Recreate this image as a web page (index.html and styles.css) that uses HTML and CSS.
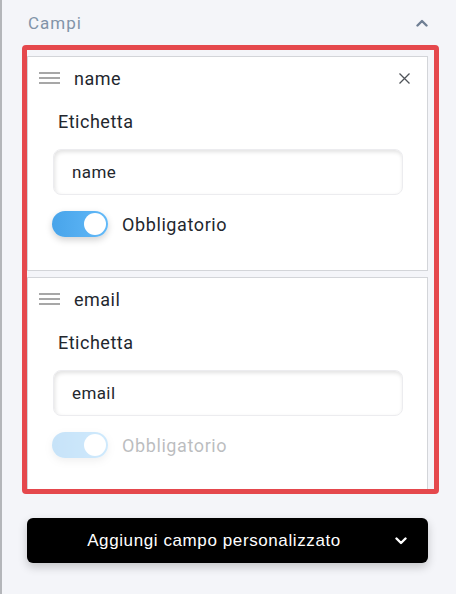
FILE: index.html
```html
<!DOCTYPE html>
<html lang="it">
<head>
    <meta charset="UTF-8">
    <meta name="viewport" content="width=device-width, initial-scale=1.0">
    <title>Campi</title>
    <link rel="stylesheet" href="styles.css">
</head>
<body>
    <div class="panel">
        <div class="section-head">
            <span class="section-title">Campi</span>
            <svg class="chevron-up" width="12" height="8" viewBox="0 0 12 8">
                <path d="M1.5 6.5 L6 2 L10.5 6.5" fill="none" stroke="#6f7f94" stroke-width="2.4" stroke-linecap="round" stroke-linejoin="round"/>
            </svg>
        </div>

        <div class="field-list">
            <div class="field-card">
                <div class="field-head">
                    <svg class="handle" width="21" height="12" viewBox="0 0 21 12">
                        <path d="M0 1 H21 M0 6 H21 M0 11 H21" stroke="#8a8a8a" stroke-width="1.4"/>
                    </svg>
                    <span class="field-name">name</span>
                    <svg class="remove" width="11" height="11" viewBox="0 0 11 11">
                        <path d="M0.5 0.5 L10.5 10.5 M10.5 0.5 L0.5 10.5" stroke="#4f5359" stroke-width="1.3"/>
                    </svg>
                </div>
                <div class="field-body">
                    <label class="field-label">Etichetta</label>
                    <input class="field-input" type="text" value="name">
                    <div class="switch-row">
                        <span class="switch"><span class="knob"></span></span>
                        <span class="switch-label">Obbligatorio</span>
                    </div>
                </div>
            </div>

            <div class="field-card">
                <div class="field-head">
                    <svg class="handle" width="21" height="12" viewBox="0 0 21 12">
                        <path d="M0 1 H21 M0 6 H21 M0 11 H21" stroke="#8a8a8a" stroke-width="1.4"/>
                    </svg>
                    <span class="field-name">email</span>
                </div>
                <div class="field-body">
                    <label class="field-label">Etichetta</label>
                    <input class="field-input" type="text" value="email">
                    <div class="switch-row disabled">
                        <span class="switch"><span class="knob"></span></span>
                        <span class="switch-label">Obbligatorio</span>
                    </div>
                </div>
            </div>
        </div>

        <button class="add-btn">
            <span class="add-text">Aggiungi campo personalizzato</span>
            <svg width="12" height="8" viewBox="0 0 12 8">
                <path d="M1.5 1.5 L6 6 L10.5 1.5" fill="none" stroke="#fff" stroke-width="2.4" stroke-linecap="round" stroke-linejoin="round"/>
            </svg>
        </button>
    </div>
</body>
</html>
```

FILE: styles.css
```css
body {
    margin: 0;
    height: 594px;
    overflow: hidden;
    background-color: #f4f5f9;
    border-left: 2px solid #b4b6ba;
    font-family: Roboto, "Liberation Sans", sans-serif;
    color: #23272e;
}
.panel {
    padding: 0 17px 0 20px;
}
.section-head {
    height: 45px;
    display: flex;
    align-items: center;
    justify-content: space-between;
    padding: 0 11px 0 6px;
}
.section-title {
    font-size: 17px;
    letter-spacing: 1px;
    color: #8193a8;
}
.field-list {
    box-sizing: border-box;
    height: 449px;
    border: 5px solid #e5484d;
    border-radius: 4px;
    padding: 6px 6px 0 0;
    overflow: hidden;
}
.field-card {
    background-color: #fff;
    border: 1px solid #d3d5d9;
    margin-bottom: 6px;
}
.field-head {
    height: 42px;
    display: flex;
    align-items: center;
    gap: 14px;
    padding: 0 17px 0 11px;
}
.field-name {
    flex: 1;
    font-size: 18px;
    letter-spacing: 0.5px;
}
.field-body {
    padding: 11px 24px 33px 25px;
}
.field-label {
    display: block;
    padding-left: 5px;
    font-size: 18px;
    line-height: 24px;
    letter-spacing: 0.5px;
    margin-bottom: 15px;
}
.field-input {
    display: block;
    box-sizing: border-box;
    width: 100%;
    height: 46px;
    margin: 0 0 16px;
    padding: 0 18px;
    border: 1px solid #ececef;
    border-radius: 8px;
    box-shadow: inset 1px 2px 4px rgba(0, 0, 0, 0.12);
    background-color: #fff;
    font-family: Roboto, "Liberation Sans", sans-serif;
    font-size: 17px;
    letter-spacing: 0.4px;
    color: #23272e;
    outline: none;
}
.switch-row {
    display: flex;
    align-items: center;
    gap: 14px;
    margin-left: -1px;
}
.switch-row.disabled {
    opacity: 0.3;
}
.switch {
    box-sizing: border-box;
    width: 56px;
    height: 26px;
    padding: 2px;
    border-radius: 13px;
    display: flex;
    justify-content: flex-end;
    align-items: center;
    background: linear-gradient(90deg, #48a4ea, #62b9f8);
    box-shadow: 0 3px 7px rgba(0, 0, 0, 0.18);
}
.knob {
    width: 22px;
    height: 22px;
    border-radius: 50%;
    background-color: #fff;
}
.switch-label {
    font-size: 18px;
    letter-spacing: 0.6px;
}
.add-btn {
    box-sizing: border-box;
    width: 401px;
    height: 45px;
    margin: 24px 0 0 5px;
    padding: 0 21px 0 6px;
    display: flex;
    align-items: center;
    border: none;
    border-radius: 6px;
    background-color: #000;
    color: #fff;
    box-shadow: 0 4px 10px rgba(0, 0, 0, 0.2);
}
.add-text {
    flex: 1;
    line-height: 20px;
    text-align: center;
    font-family: "Liberation Sans", Arial, sans-serif;
    font-size: 17px;
    letter-spacing: 0.6px;
}
```
